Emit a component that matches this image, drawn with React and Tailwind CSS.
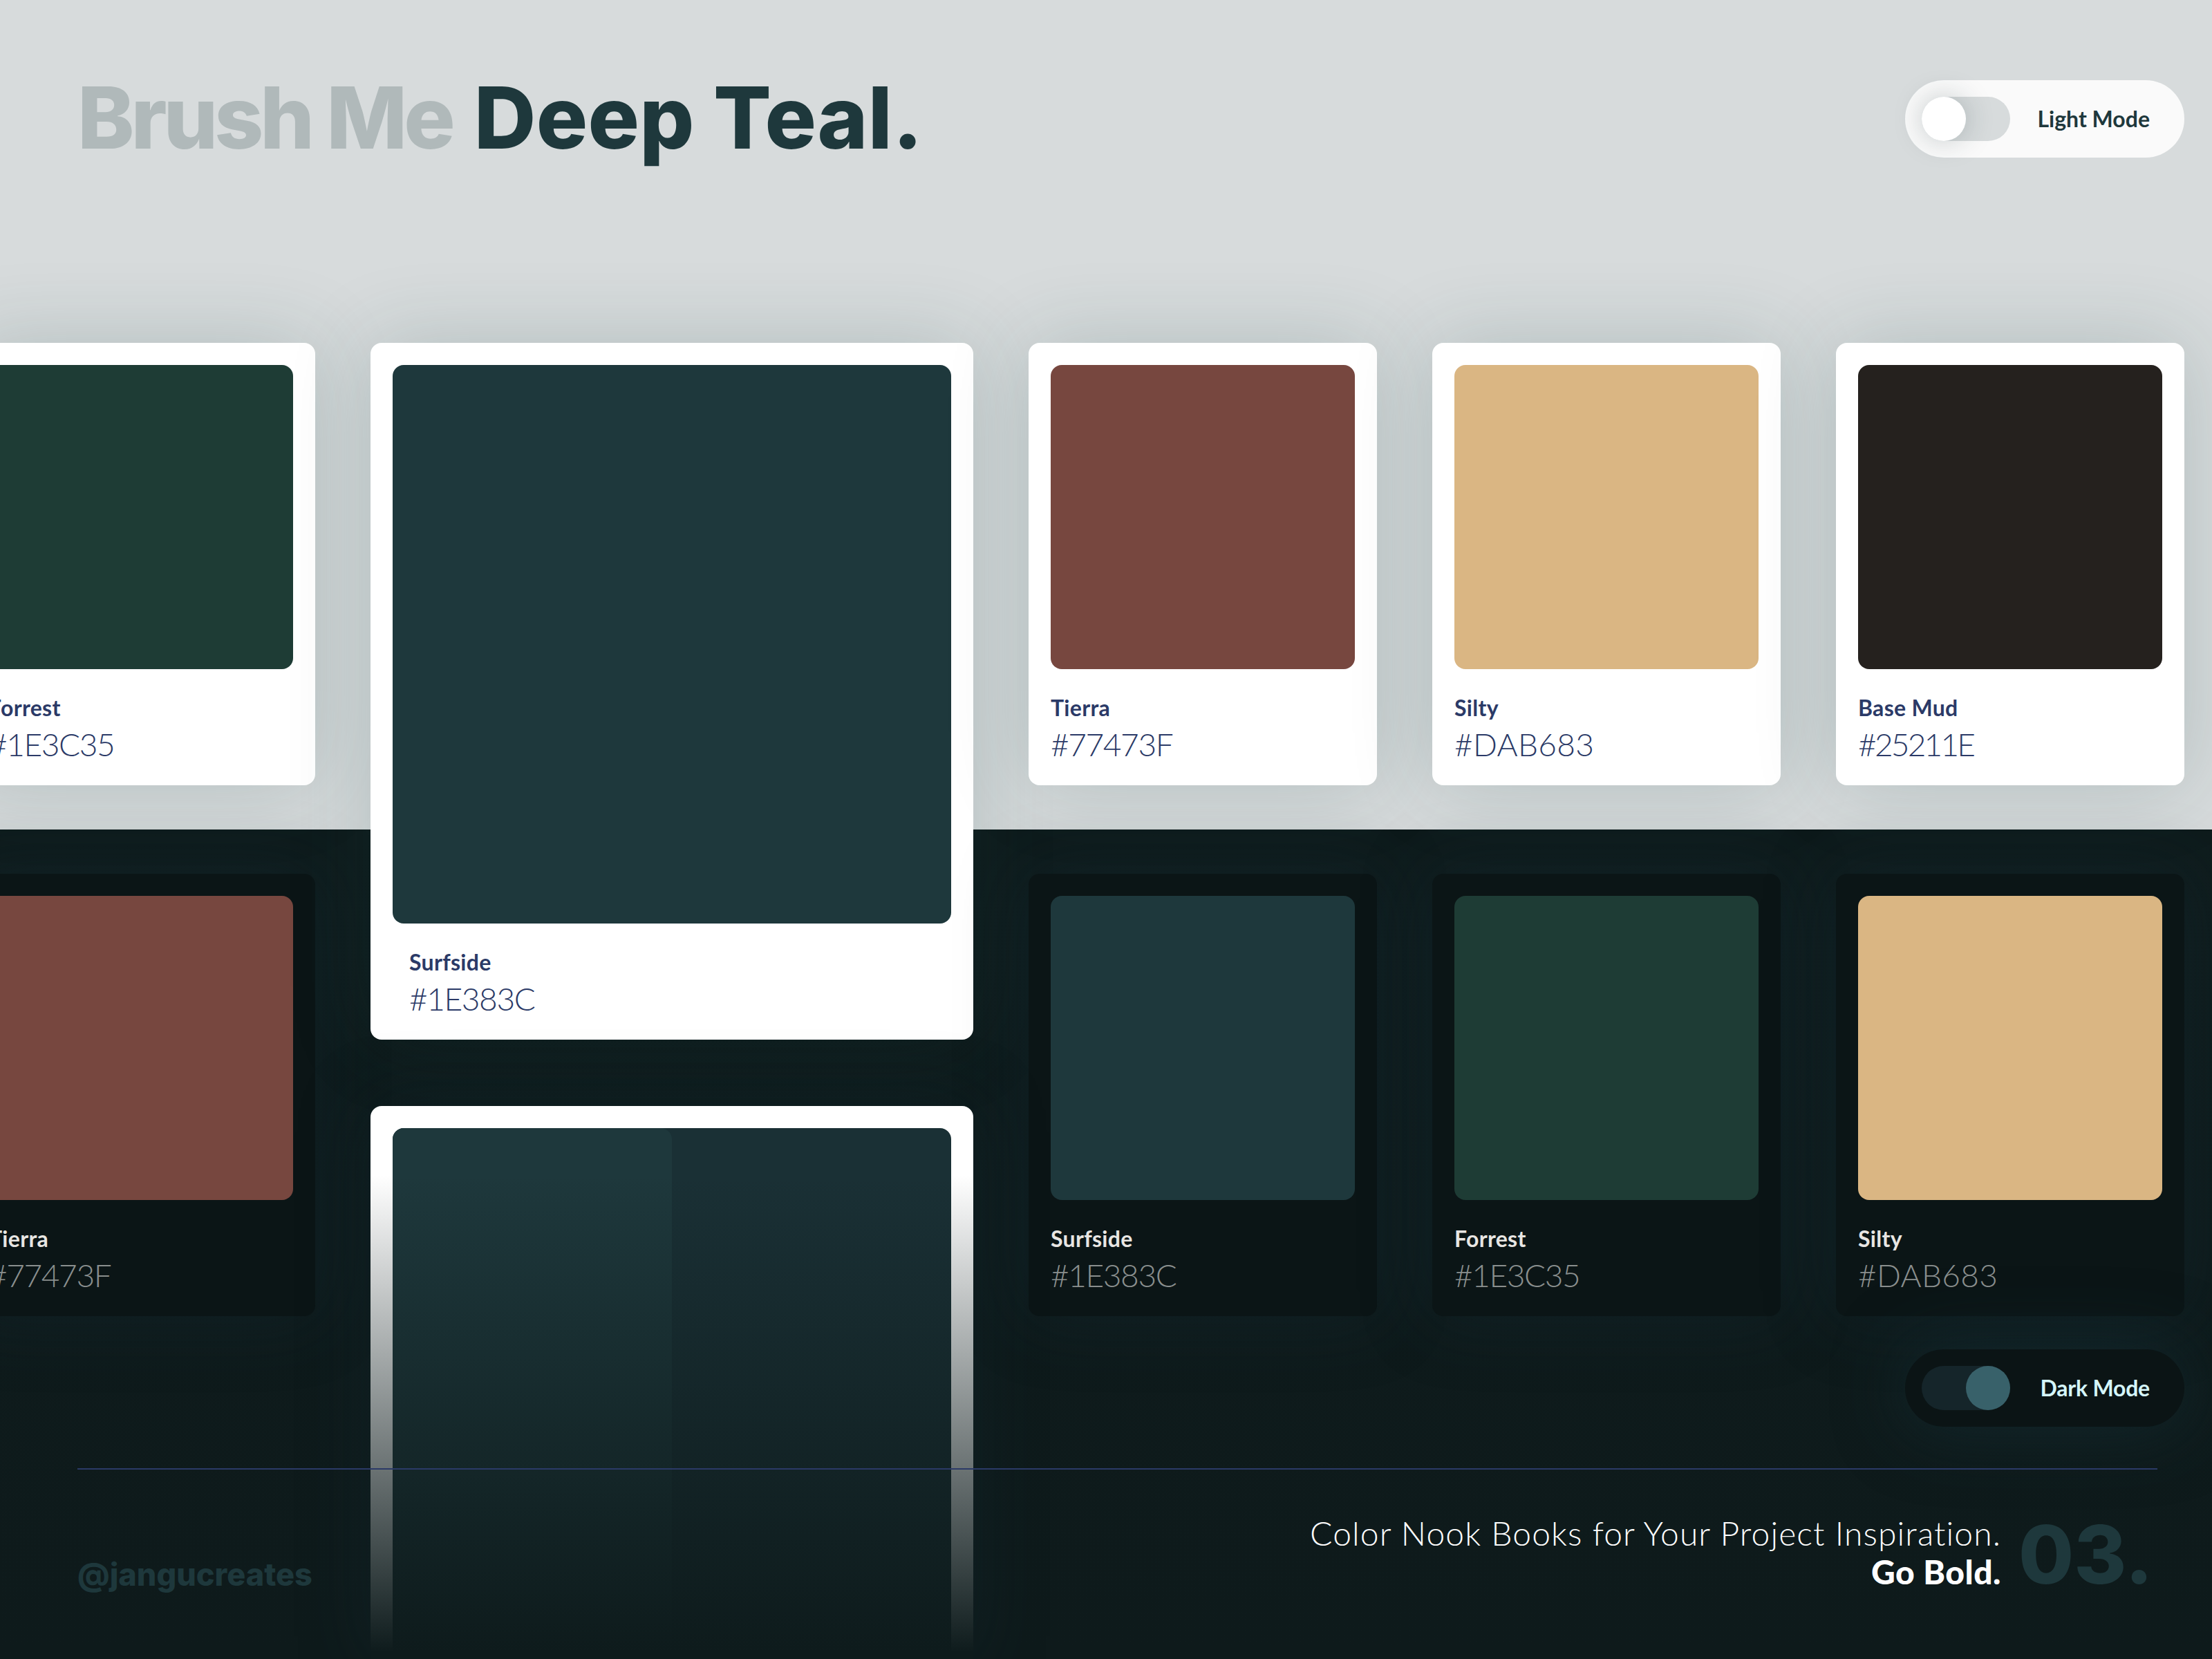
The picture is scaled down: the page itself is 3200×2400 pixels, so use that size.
const Card = ({ name, hex, color, dark, hexClass = "tracking-[-1.4px]" }) => (
  <div className={`w-[504px] h-[640px] rounded-2xl p-8 ${dark ? "bg-[#0b1516] shadow-[0_0_100px_rgba(20,42,52,0.4)]" : "bg-white shadow-[0_0_120px_rgba(30,70,70,0.2)]"}`}>
    <div className="h-[440px] rounded-2xl" style={{ backgroundColor: color }} />
    <p className={`mt-9 text-[32px] leading-[40px] font-bold tracking-[0.3px] ${dark ? "text-[#e8e6e3]" : "text-[#2b3a67]"}`}>{name}</p>
    <p className={`mt-[5px] text-[46px] leading-[56px] font-light ${hexClass} ${dark ? "text-[#8a8f8e]" : "text-[#2b3a67]"}`}>{hex}</p>
  </div>
);

const Toggle = ({ dark, className = "" }) => (
  <div className={`w-[404px] h-[112px] rounded-full flex items-center pl-6 ${dark ? "bg-[#0b1415] shadow-[0_0_100px_rgba(22,48,56,0.6)]" : "bg-[#fafafa]"} ${className}`}>
    <div className={`w-[128px] h-16 rounded-full flex ${dark ? "bg-[#15252a] justify-end" : "bg-[#d7dbdc] justify-start"}`}>
      <div className={`w-16 h-16 rounded-full ${dark ? "bg-[#38616a]" : "bg-white shadow-[0_0_40px_rgba(30,56,60,0.25)]"}`} />
    </div>
    <span className={`ml-auto mr-[50px] text-[32px] font-bold ${dark ? "text-[#d5f6fa] tracking-[-0.2px]" : "text-[#1e383c]"}`}>{dark ? "Dark Mode" : "Light Mode"}</span>
  </div>
);

export default function App() {
  return (
    <div className="relative w-[3200px] h-[2400px] overflow-hidden bg-[linear-gradient(to_bottom,#d7dbdc_0,#d7dbdc_1200px,#0f1c1d_1200px,#0e1a1b_2400px)] font-['Lato','Liberation_Sans',sans-serif]">
      <header className="h-[496px] flex items-start justify-between pl-[112px] pr-10 pt-[116px]">
        <h1 className="-mt-0.5 text-[124px] leading-[112px] font-extrabold text-[#b0b9ba] font-['Inter',sans-serif] tracking-[-5px]">
          Brush Me <span className="ml-[10px] text-[#1e383c] tracking-[0.3px]">Deep Teal.</span>
        </h1>
        <Toggle />
      </header>
      <main className="flex gap-20 -ml-12">
        <div className="flex flex-col gap-32">
          <Card name="Forrest" hex="#1E3C35" color="#1e3c35" />
          <Card name="Tierra" hex="#77473F" color="#77473f" dark />
        </div>
        <div className="flex flex-col gap-24 w-[872px]">
          <div className="h-[1008px] rounded-2xl bg-white p-8 shadow-[0_0_120px_rgba(30,70,70,0.2)]">
            <div className="h-[808px] rounded-2xl bg-[#1e383c]" />
            <p className="mt-9 ml-6 text-[32px] leading-[40px] font-bold tracking-[0.3px] text-[#2b3a67]">Surfside</p>
            <p className="mt-[5px] ml-6 text-[46px] leading-[56px] font-light tracking-[-1.4px] text-[#2b3a67]">#1E383C</p>
          </div>
          <div className="relative h-[800px] rounded-t-2xl bg-white p-8 shadow-[0_0_100px_rgba(20,42,52,0.35)]">
            <div className="h-[808px] rounded-2xl bg-[#1a3035]">
              <div className="w-1/2 h-full rounded-2xl bg-[#1e383c]" />
            </div>
            <div className="absolute inset-0 bg-[linear-gradient(to_bottom,rgba(14,27,28,0)_100px,#0e1b1c_790px)]" />
          </div>
        </div>
        <div className="flex flex-col gap-32">
          <Card name="Tierra" hex="#77473F" color="#77473f" />
          <Card name="Surfside" hex="#1E383C" color="#1e383c" dark />
        </div>
        <div className="flex flex-col gap-32">
          <Card name="Silty" hex="#DAB683" color="#dab683" hexClass="tracking-[0.3px]" />
          <Card name="Forrest" hex="#1E3C35" color="#1e3c35" dark />
        </div>
        <div className="flex flex-col gap-32">
          <Card name="Base Mud" hex="#25211E" color="#25211e" hexClass="tracking-[-2.8px]" />
          <Card name="Silty" hex="#DAB683" color="#dab683" dark hexClass="tracking-[0.3px]" />
          <Toggle dark className="self-end -mt-20" />
        </div>
      </main>
      <footer className="absolute left-[112px] top-[2124px] w-[3009px]">
        <div className="h-0.5 bg-[#2b3a67]" />
        <div className="flex items-start justify-between pt-16">
          <span className="mt-[54px] text-[45px] font-extrabold text-[#1e383c] font-['Inter',sans-serif]">@jangucreates</span>
          <div className="flex items-start gap-[25px]">
            <div className="text-right text-[48px] leading-[56px] text-white">
              <p className="font-light tracking-[1.1px]">Color Nook Books for Your Project Inspiration.</p>
              <p className="font-black tracking-[0.5px]">Go Bold.</p>
            </div>
            <span className="mr-[6px] text-[116px] leading-[118px] font-extrabold text-[#1e383c] font-['Inter',sans-serif]">03.</span>
          </div>
        </div>
      </footer>
    </div>
  );
}
